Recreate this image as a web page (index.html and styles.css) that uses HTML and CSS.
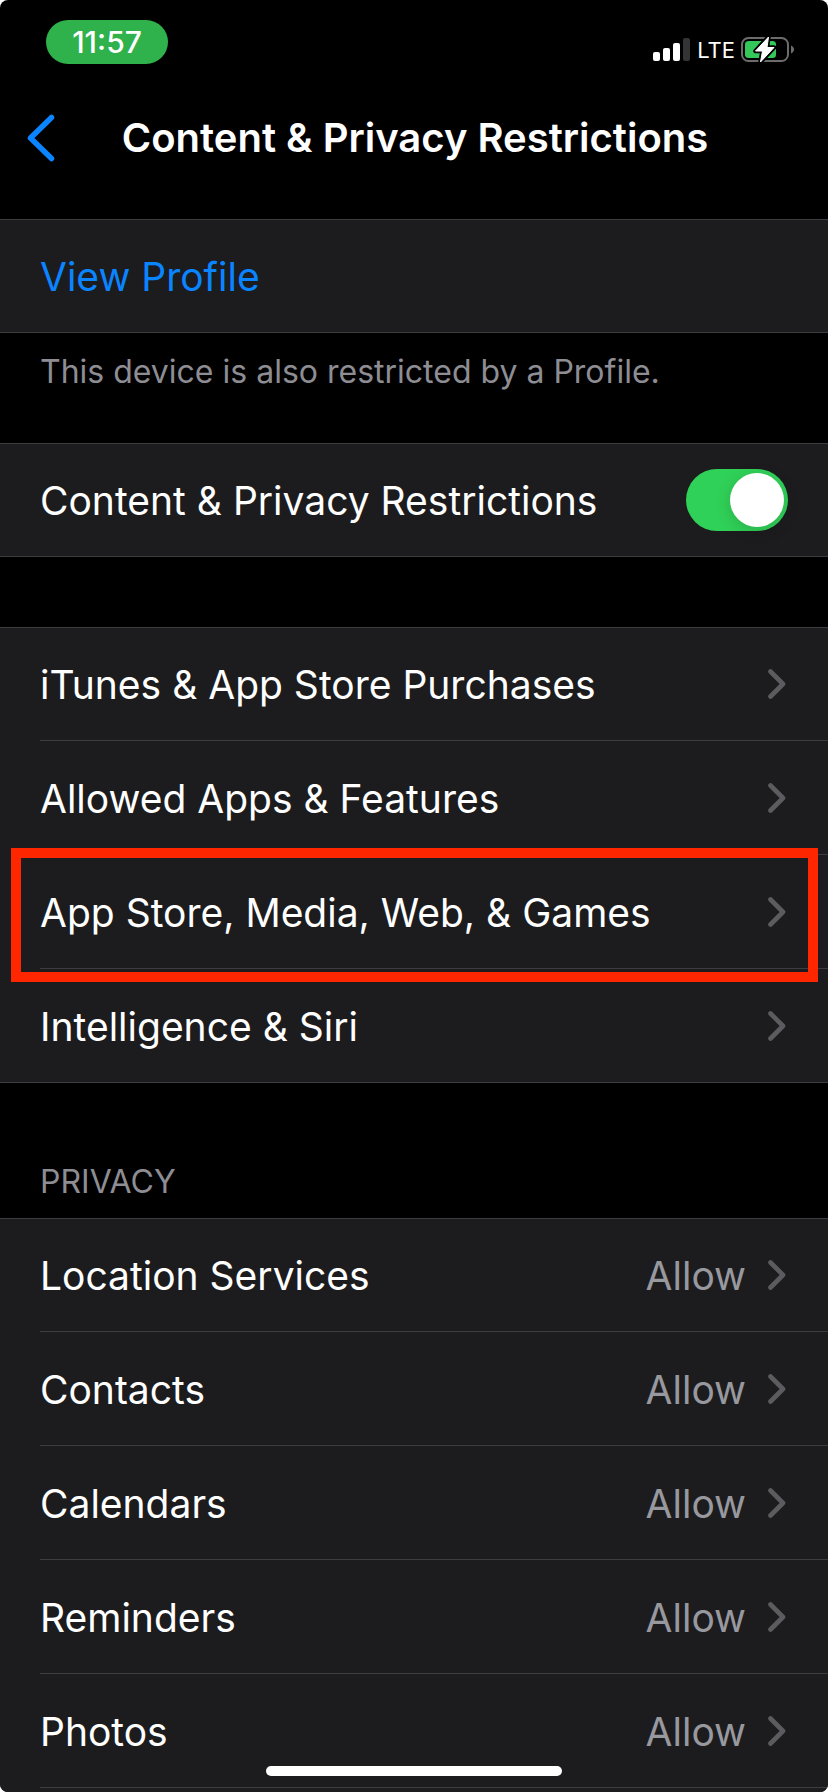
FILE: index.html
```html
<!DOCTYPE html>
<html lang="en">
<head>
<meta charset="utf-8">
<meta name="viewport" content="width=device-width, initial-scale=1">
<title>Content &amp; Privacy Restrictions</title>
<link rel="stylesheet" href="styles.css">
</head>
<body>
<svg class="defs" aria-hidden="true">
  <symbol id="chevron" viewBox="0 0 18 30"><path d="M2.500 2.500 15 15 2.500 27.500" fill="none" stroke="currentColor" stroke-width="4.600" stroke-linecap="round" stroke-linejoin="round"/></symbol>
</svg>
<div class="screen">
  <div class="status-bar">
    <span class="time">11:57</span>
    <div class="indicators">
      <svg class="signal" width="38" height="24" viewBox="0 0 38 24" aria-hidden="true">
        <g fill="#fff">
          <rect x="0" y="14" width="7" height="9" rx="2"/>
          <rect x="10" y="10" width="7" height="13" rx="2"/>
          <rect x="20" y="5" width="7" height="18" rx="2"/>
        </g>
        <rect x="30" y="0" width="7" height="23" rx="2" fill="#343436"/>
      </svg>
      <span class="network">LTE</span>
      <svg class="battery" width="54" height="28" viewBox="0 0 54 28" aria-hidden="true">
        <rect x="1" y="2" width="46" height="23" rx="6.500" fill="none" stroke="#6c6c6e" stroke-width="2"/>
        <path d="M50 9.500c4 1.500 4 6.500 0 8z" fill="#6c6c6e"/>
        <rect x="4" y="5" width="31" height="17" rx="3.500" fill="#34c759"/>
        <path d="M27.500 1 14.500 15h7L19.500 26 33 11.500h-7z" fill="#fff" stroke="#000" stroke-width="4.500" stroke-linejoin="round"/>
        <path d="M27.500 1 14.500 15h7L19.500 26 33 11.500h-7z" fill="#fff" stroke="#fff" stroke-width="1" stroke-linejoin="round"/>
      </svg>
    </div>
  </div>

  <header class="nav-bar">
    <button class="back" type="button" aria-label="Back">
      <svg width="28" height="48" viewBox="0 0 28 48" aria-hidden="true"><path d="M24.500 3.500 3.500 24 24.500 44.500" fill="none" stroke="currentColor" stroke-width="5.500" stroke-linecap="round" stroke-linejoin="round"/></svg>
    </button>
    <h1 class="title">Content &amp; Privacy Restrictions</h1>
  </header>

  <main class="content">
    <section class="profile">
      <ul class="group">
        <li class="row"><a class="row-body link" href="#profile"><span class="label">View Profile</span></a></li>
      </ul>
      <p class="note">This device is also restricted by a Profile.</p>
    </section>

    <ul class="group">
      <li class="row">
        <label class="row-body" for="restrictions">
          <span class="label">Content &amp; Privacy Restrictions</span>
          <input class="toggle" id="restrictions" type="checkbox" role="switch" checked>
        </label>
      </li>
    </ul>

    <ul class="group group-store">
      <li class="row"><a class="row-body" href="#purchases"><span class="label">iTunes &amp; App Store Purchases</span><svg class="chevron"><use href="#chevron"/></svg></a></li>
      <li class="row"><a class="row-body" href="#apps"><span class="label">Allowed Apps &amp; Features</span><svg class="chevron"><use href="#chevron"/></svg></a></li>
      <li class="row highlighted"><a class="row-body" href="#media"><span class="label">App Store, Media, Web, &amp; Games</span><svg class="chevron"><use href="#chevron"/></svg></a></li>
      <li class="row"><a class="row-body" href="#siri"><span class="label">Intelligence &amp; Siri</span><svg class="chevron"><use href="#chevron"/></svg></a></li>
    </ul>

    <h2 class="section-title">PRIVACY</h2>
    <ul class="group group-privacy">
      <li class="row"><a class="row-body" href="#location"><span class="label">Location Services</span><span class="value">Allow</span><svg class="chevron"><use href="#chevron"/></svg></a></li>
      <li class="row"><a class="row-body" href="#contacts"><span class="label">Contacts</span><span class="value">Allow</span><svg class="chevron"><use href="#chevron"/></svg></a></li>
      <li class="row"><a class="row-body" href="#calendars"><span class="label">Calendars</span><span class="value">Allow</span><svg class="chevron"><use href="#chevron"/></svg></a></li>
      <li class="row"><a class="row-body" href="#reminders"><span class="label">Reminders</span><span class="value">Allow</span><svg class="chevron"><use href="#chevron"/></svg></a></li>
      <li class="row"><a class="row-body" href="#photos"><span class="label">Photos</span><span class="value">Allow</span><svg class="chevron"><use href="#chevron"/></svg></a></li>
    </ul>
  </main>
  <div class="home-indicator"></div>
</div>
</body>
</html>
```
FILE: styles.css
```css
* {
  box-sizing: border-box;
}

body {
  margin: 0;
  background: #fff;
  color: #fff;
  font-family: Inter, "Liberation Sans", sans-serif;
  font-size: 39px;
  line-height: 48px;
}

.defs {
  display: none;
}

.screen {
  display: flex;
  flex-direction: column;
  min-height: 100vh;
  overflow: hidden;
  border-radius: 8px;
  background: #000;
}

.status-bar {
  display: flex;
  justify-content: space-between;
  align-items: flex-start;
  padding: 20px 33px 0 46px;
}

.time {
  width: 122px;
  border-radius: 22px;
  background: #2fb14c;
  font-size: 30px;
  font-weight: 500;
  line-height: 44px;
  text-align: center;
}

.indicators {
  display: flex;
  align-items: center;
  gap: 6px;
  padding-top: 16px;
}

.network {
  font-size: 22px;
  line-height: 28px;
}

.nav-bar {
  display: flex;
  align-items: center;
  height: 155px;
  padding: 0 27px 8px;
}

.back {
  display: flex;
  width: 28px;
  padding: 0;
  border: 0;
  background: none;
  color: #0a84ff;
}

.title {
  flex: 1;
  margin: 0;
  padding-right: 26px;
  font-size: 40px;
  font-weight: 600;
  text-align: center;
  white-space: nowrap;
}

.content {
  display: flex;
  flex: 1;
  flex-direction: column;
}

.group {
  margin: 0;
  padding: 0;
  list-style: none;
  background: #1c1c1e;
  box-shadow: inset 0 1px #3d3d41, inset 0 -1px #3d3d41;
}

.row {
  position: relative;
  padding-left: 40px;
}

.row-body {
  display: flex;
  align-items: center;
  min-height: 114px;
  padding-right: 40px;
  border-bottom: 1px solid #3d3d41;
  color: #fff;
  text-decoration: none;
}

.row:last-child .row-body {
  border-color: transparent;
}

.row .link {
  color: #0a84ff;
}

.label,
.value {
  padding-top: 2px;
}

.label {
  flex: 1;
}

.value {
  color: #98989f;
}

.chevron {
  width: 18px;
  height: 30px;
  margin-left: 22px;
  margin-right: 2px;
  color: #5b5b60;
}

.note {
  margin: 0;
  padding: 19px 40px 51px;
  color: #8d8d93;
  font-size: 32px;
  line-height: 40px;
}

.toggle {
  display: flex;
  align-items: center;
  justify-content: flex-end;
  width: 102px;
  height: 62px;
  margin: 0;
  padding: 4px;
  border-radius: 31px;
  background: #30d158;
  appearance: none;
}

.toggle::before {
  width: 54px;
  height: 54px;
  border-radius: 50%;
  background: #fff;
  box-shadow: 0 4px 16px rgba(0, 0, 0, 0.16);
  content: "";
}

.toggle:not(:checked) {
  justify-content: flex-start;
  background: #39393d;
}

.group-store {
  margin-top: 70px;
}

.highlighted::after {
  position: absolute;
  inset: -7px 10px -13px 11px;
  z-index: 1;
  border: 10px solid #ff2600;
  pointer-events: none;
  content: "";
}

.section-title {
  margin: 0;
  padding: 79px 40px 16px;
  color: #8d8d93;
  font-size: 32px;
  font-weight: 400;
  line-height: 40px;
}

.group-privacy {
  flex: 1;
  box-shadow: inset 0 1px #3d3d41;
}

.group-privacy .row:last-child .row-body {
  border-color: #3d3d41;
}

.home-indicator {
  position: fixed;
  bottom: 16px;
  left: 50%;
  width: 296px;
  height: 10px;
  margin-left: -148px;
  border-radius: 5px;
  background: #fff;
}
```
